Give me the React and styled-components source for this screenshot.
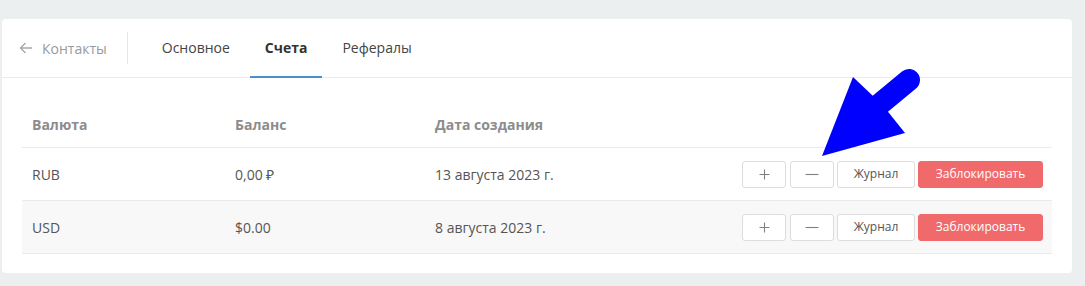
import React from "react";
import styled, { createGlobalStyle } from "styled-components";

const Global = createGlobalStyle`
  html, body { margin: 0; padding: 0; background: #eceff0; }
  body { font-family: "Open Sans", "Liberation Sans", sans-serif; }
  * { box-sizing: border-box; }
`;

const Page = styled.div`
  padding: 19px 13px 13px 2px;
  position: relative;
  height: 286px;
`;

const Card = styled.div`
  background: #fff;
  border-radius: 4px;
  height: 254px;
`;

const Header = styled.div`
  display: flex;
  align-items: stretch;
  height: 59px;
  border-bottom: 1px solid #e9ebec;
  padding-left: 17px;
`;

const Back = styled.div`
  display: flex;
  align-items: center;
  gap: 9px;
  color: #9a9a9a;
  font-size: 14px;
  padding-right: 20px;
  margin: 13px 0;
  border-right: 1px solid #e6e6e6;
`;

const Tabs = styled.div`
  display: flex;
  gap: 5px;
  margin-left: 19px;
`;

const Tab = styled.div`
  display: flex;
  align-items: center;
  padding: 0 15px;
  font-size: 14px;
  color: ${(p) => (p.$active ? "#333" : "#444")};
  font-weight: ${(p) => (p.$active ? 700 : 400)};
  border-bottom: 2px solid ${(p) => (p.$active ? "#4a8fcf" : "transparent")};
  margin-bottom: -1px;
`;

const Body = styled.div`
  padding: 18px 20px 0 20px;
`;

const Table = styled.div`
  display: grid;
  grid-template-columns: 203px 200px 1fr auto;
`;

const Row = styled.div`
  display: contents;
`;

const Cell = styled.div`
  display: flex;
  align-items: center;
  height: ${(p) => (p.$head ? "52px" : "53px")};
  padding-left: ${(p) => (p.$actions ? "0" : "10px")};
  padding-right: ${(p) => (p.$actions ? "9px" : "0")};
  padding-top: ${(p) => (p.$head ? "5px" : "0")};
  border-bottom: 1px solid #e9ebec;
  background: ${(p) => (p.$alt ? "#f8f8f8" : "transparent")};
  font-size: 14px;
  color: ${(p) => (p.$head ? "#8c8c8c" : "#555")};
  font-weight: ${(p) => (p.$head ? 700 : 400)};
  gap: 3px;
`;

const Btn = styled.button`
  height: 27px;
  width: ${(p) => p.$w}px;
  border-radius: 3px;
  border: 1px solid ${(p) => (p.$danger ? "#f06a6c" : "#dddddd")};
  background: ${(p) => (p.$danger ? "#f06a6c" : "#fff")};
  color: ${(p) => (p.$danger ? "#fff" : "#555")};
  font-family: "Open Sans", "Liberation Sans", sans-serif;
  font-size: 12px;
  padding: 0;
  display: flex;
  align-items: center;
  justify-content: center;
  line-height: 1;
  &:first-child { margin-right: 1px; }
`;

const Arrow = styled.svg`
  position: absolute;
  left: 0;
  top: 0;
  pointer-events: none;
`;

const rows = [
  { cur: "RUB", bal: "0,00 ₽", date: "13 августа 2023 г." },
  { cur: "USD", bal: "$0.00", date: "8 августа 2023 г." },
];

const Plus = () => (
  <svg width="11" height="11" viewBox="0 0 11 11" stroke="#808080" strokeWidth="1.1">
    <path d="M5.5 0.5v10M0.5 5.5h10" />
  </svg>
);
const Minus = () => (
  <svg width="14" height="3" viewBox="0 0 14 3" stroke="#808080" strokeWidth="1.1">
    <path d="M0.5 1.5h13" />
  </svg>
);

export default function App() {
  return (
    <>
      <Global />
      <Page>
        <Card>
          <Header>
            <Back>
              <svg width="14" height="12" viewBox="0 0 14 12" fill="none" stroke="#a8a8a8" strokeWidth="1.3">
                <path d="M13 6H1.5M6.5 1L1.5 6l5 5" />
              </svg>
              Контакты
            </Back>
            <Tabs>
              <Tab>Основное</Tab>
              <Tab $active>Счета</Tab>
              <Tab>Рефералы</Tab>
            </Tabs>
          </Header>
          <Body>
            <Table>
              <Row>
                <Cell $head>Валюта</Cell>
                <Cell $head>Баланс</Cell>
                <Cell $head>Дата создания</Cell>
                <Cell $head $actions />
              </Row>
              {rows.map((r, i) => (
                <Row key={r.cur}>
                  <Cell $alt={i === 1}>{r.cur}</Cell>
                  <Cell $alt={i === 1}>{r.bal}</Cell>
                  <Cell $alt={i === 1}>{r.date}</Cell>
                  <Cell $alt={i === 1} $actions>
                    <Btn $w={44} aria-label="plus"><Plus /></Btn>
                    <Btn $w={44} aria-label="minus"><Minus /></Btn>
                    <Btn $w={78}>Журнал</Btn>
                    <Btn $w={125} $danger>Заблокировать</Btn>
                  </Cell>
                </Row>
              ))}
            </Table>
          </Body>
        </Card>
        <Arrow width="1085" height="286" viewBox="0 0 1085 286">
          <line x1="880" y1="104" x2="909" y2="80" stroke="#0000ff" strokeWidth="22" strokeLinecap="round" />
          <polygon points="822,156 853,77 873,96 889,113 905,133" fill="#0000ff" />
        </Arrow>
      </Page>
    </>
  );
}
